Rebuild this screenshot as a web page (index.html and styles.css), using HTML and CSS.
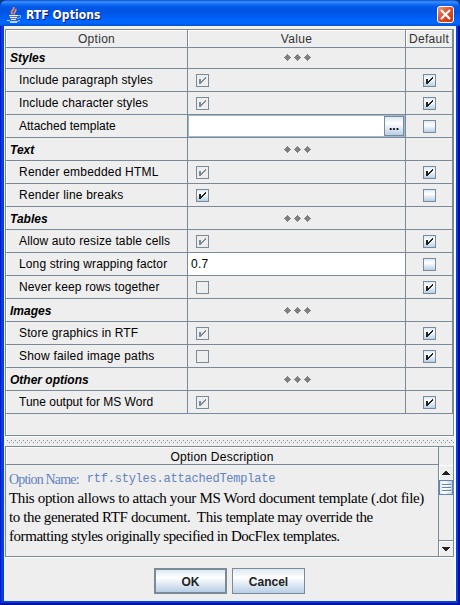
FILE: index.html
```
<!DOCTYPE html>
<html lang="en">
<head>
<meta charset="utf-8">
<title>RTF Options</title>
<link rel="stylesheet" href="styles.css">
</head>
<body>
<svg width="0" height="0" class="defs">
  <symbol id="tick" viewBox="0 0 7 7"><path d="M0 2h2v2h1v-1h1v-1h1v-1h1v-1h1v2h-1v1h-1v1h-1v1h-1v1h-1v1h-2z"/></symbol>
  <symbol id="dots" viewBox="0 0 27 7"><path d="M3 0h1v1h1v1h1v1h1v1h-1v1h-1v1h-1v1h-1v-1h-1v-1h-1v-1h-1v-1h1v-1h1v-1h1zM13 0h1v1h1v1h1v1h1v1h-1v1h-1v1h-1v1h-1v-1h-1v-1h-1v-1h-1v-1h1v-1h1v-1h1zM23 0h1v1h1v1h1v1h1v1h-1v1h-1v1h-1v1h-1v-1h-1v-1h-1v-1h-1v-1h1v-1h1v-1h1z"/></symbol>
</svg>
<div class="window">
  <header class="titlebar">
    <svg class="java" width="16" height="16" viewBox="0 0 16 16" fill="none">
      <path d="M5.500 7C2 4 8 3.500 6.500 0M7.500 7.500C6 5 10 4.500 8.500 2" stroke="#f58a62" stroke-width="1.7"/>
      <path d="M2 8h9v1h-9zM3 10h7v1h-7zM4 12h5v1h-5z" fill="#e8eeff"/>
      <path d="M2 9h9v1h-9zM3 11h7v1h-7z" fill="#5a6fb8"/>
      <path d="M11 8.500h2.500v2l-3 1" stroke="#9fb0e6"/>
      <path d="M0 13.500h2l2 1h6l3-1M3 15.500h7" stroke="#c5d2fa"/>
    </svg>
    <h1>RTF Options</h1>
    <span class="close"><svg width="11" height="11" viewBox="0 0 11 11"><path d="M1 1l9 9M10 1l-9 9" stroke="#fff" stroke-width="2.2"/></svg></span>
  </header>
  <main class="content">
    <section class="options">
      <div class="row head"><span>Option</span><span>Value</span><span>Default</span></div>
      <div class="row group"><b>Styles</b><span><svg class="dots"><use href="#dots"/></svg></span><span></span></div>
      <div class="row"><span>Include paragraph styles</span><span><i class="box off"><svg><use href="#tick"/></svg></i></span><span><i class="box"><svg><use href="#tick"/></svg></i></span></div>
      <div class="row"><span>Include character styles</span><span><i class="box off"><svg><use href="#tick"/></svg></i></span><span><i class="box"><svg><use href="#tick"/></svg></i></span></div>
      <div class="row"><span class="tight">Attached template</span><span class="editor"><i class="browse">...</i></span><span><i class="box"></i></span></div>
      <div class="row group"><b>Text</b><span><svg class="dots"><use href="#dots"/></svg></span><span></span></div>
      <div class="row"><span class="wide">Render embedded HTML</span><span><i class="box off"><svg><use href="#tick"/></svg></i></span><span><i class="box"><svg><use href="#tick"/></svg></i></span></div>
      <div class="row"><span class="wide">Render line breaks</span><span><i class="box"><svg><use href="#tick"/></svg></i></span><span><i class="box"></i></span></div>
      <div class="row group"><b>Tables</b><span><svg class="dots"><use href="#dots"/></svg></span><span></span></div>
      <div class="row"><span>Allow auto resize table cells</span><span><i class="box off"><svg><use href="#tick"/></svg></i></span><span><i class="box"><svg><use href="#tick"/></svg></i></span></div>
      <div class="row"><span>Long string wrapping factor</span><span class="text">0.7</span><span><i class="box"></i></span></div>
      <div class="row"><span>Never keep rows together</span><span><i class="box off"></i></span><span><i class="box"><svg><use href="#tick"/></svg></i></span></div>
      <div class="row group"><b>Images</b><span><svg class="dots"><use href="#dots"/></svg></span><span></span></div>
      <div class="row"><span>Store graphics in RTF</span><span><i class="box off"><svg><use href="#tick"/></svg></i></span><span><i class="box"><svg><use href="#tick"/></svg></i></span></div>
      <div class="row"><span class="wide">Show failed image paths</span><span><i class="box off"></i></span><span><i class="box"><svg><use href="#tick"/></svg></i></span></div>
      <div class="row group"><b>Other options</b><span><svg class="dots"><use href="#dots"/></svg></span><span></span></div>
      <div class="row"><span class="tight">Tune output for MS Word</span><span><i class="box off"><svg><use href="#tick"/></svg></i></span><span><i class="box"><svg><use href="#tick"/></svg></i></span></div>
    </section>
    <div class="splitter"></div>
    <section class="desc">
      <div class="main">
        <h2>Option Description</h2>
        <div class="body">
          <p class="name"><span>Option Name:</span><code>rtf.styles.attachedTemplate</code></p>
          <p class="first">This option allows to attach your MS Word document template (.dot file)</p>
          <p>to the generated RTF document.&nbsp; This template may override the</p>
          <p class="last">formatting styles originally specified in DocFlex templates.</p>
        </div>
      </div>
      <div class="scroll">
        <div class="corner"></div>
        <div class="arrow"><svg width="8" height="4"><path d="M3 0h2v1h1v1h1v1h1v1h-8v-1h1v-1h1v-1h1z"/></svg></div>
        <div class="track"><div class="thumb"><i></i><i></i><i></i></div></div>
        <div class="arrow down"><svg width="8" height="4"><path d="M0 0h8v1h-1v1h-1v1h-1v1h-2v-1h-1v-1h-1v-1h-1z"/></svg></div>
      </div>
    </section>
    <div class="buttons"><button class="ok">OK</button><button>Cancel</button></div>
  </main>
</div>
</body>
</html>
```
FILE: styles.css
```
* { box-sizing: border-box; margin: 0; padding: 0; }
body { width: 460px; height: 605px; overflow: hidden; background: #0a3a80; font: 12px/15px "Liberation Sans", Arial, sans-serif; color: #000; }
svg { display: block; shape-rendering: crispEdges; }
.java, .close svg { shape-rendering: auto; }
.defs { position: absolute; }
.window { width: 460px; height: 605px; padding: 0 4px 4px; border-radius: 7px 7px 0 0; background: #0040e0; box-shadow: inset 1px 0 #0019c8, inset -2px -2px #00109c; overflow: hidden; }
.titlebar { display: flex; align-items: center; height: 26px; margin: 0 -4px; padding: 3px 6px 0 7px; background: linear-gradient(#0a4fc8 0, #3b92ff 2px, #1470f8 4px, #0058e6 7px, #0054e3 12px, #0062fb 19px, #0068ff 23px, #0050d8 26px); }
.titlebar h1 { flex: 1; margin: 1px 0 0 3px; font: bold 12px/16px "DejaVu Sans", sans-serif; font-stretch: condensed; letter-spacing: .08px; color: #fff; text-shadow: 1px 1px #0a1883; }
.close { display: flex; align-items: center; justify-content: center; width: 17px; height: 17px; border: 1px solid #fff; border-radius: 3px; background: linear-gradient(135deg, #ee9878, #e1502b 45%, #c8350d); }
.content { display: flex; flex-direction: column; width: 452px; height: 575px; padding: 3px 2px 0 1px; background: #eee; box-shadow: inset 0 2px #f5f3e8, inset -2px 0 #f8f8f4; }
.options { height: 407px; border: 1px solid #7a8a99; box-shadow: 1px 1px #fff, inset 1px 1px #fff; }
.row { display: grid; grid-template-columns: 182px 218px 47px; height: 23px; }
.row > * { display: flex; align-items: center; border-right: 1px solid #7a8a99; border-bottom: 1px solid #7a8a99; white-space: nowrap; }
.row > :first-child { padding-left: 13px; letter-spacing: .13px; }
.row > .wide:first-child { letter-spacing: .21px; }
.row > .tight:first-child { letter-spacing: 0; }
.row > :nth-child(2) { padding-left: 8px; }
.row > :nth-child(3) { justify-content: center; }
.row.head { height: 16px; color: #333; }
.row.head > * { justify-content: center; padding: 2px 0 0; box-shadow: inset 1px 1px #fff; letter-spacing: .3px; }
.row.group > b { padding: 2px 0 0 4px; font-style: italic; letter-spacing: 0; }
.row.group > :nth-child(2) { justify-content: center; padding-left: 2px; }
.dots { width: 27px; height: 7px; fill: #808080; }
.box { display: block; width: 13px; height: 13px; padding: 2px; border: 1px solid #7a8a99; background: linear-gradient(#dce8f3, #fff 35%, #b8cfe5); }
.box svg { width: 7px; height: 7px; fill: #222; }
.box.off { background: #eee; }
.box.off svg { fill: #7a8a99; }
.row > .editor { justify-content: flex-end; background: #fff; box-shadow: inset 0 0 0 1px #a3b8cc; padding: 1px; }
.browse { width: 20px; height: 20px; border: 1px solid #7a8a99; background: linear-gradient(#dce8f3, #fff 35%, #b8cfe5); font: bold 12px/19px "Liberation Sans", sans-serif; text-align: center; }
.row > .text:nth-child(2) { background: #fff; padding: 1px 0 0 3px; letter-spacing: .3px; }
.splitter { height: 3px; margin: 4px 0 3px 2px; background: radial-gradient(circle at .5px .5px, #7a8a99 .5px, transparent .51px) 0 0 / 4px 4px, radial-gradient(circle at 2.5px 2.5px, #7a8a99 .5px, transparent .51px) 0 0 / 4px 4px; }
.desc { display: flex; height: 111px; border: 1px solid #7a8a99; box-shadow: 1px 1px #fff; }
.main { width: 432px; }
.desc h2 { height: 18px; border-bottom: 1px solid #7a8a99; box-shadow: inset 1px 1px #fff; font-weight: normal; font-size: 12px; line-height: 20px; text-align: center; letter-spacing: .25px; }
.body { padding: 5px 0 0 3px; font: 15px/19px "Liberation Serif", serif; letter-spacing: -.38px; white-space: nowrap; }
.body .first { letter-spacing: -.33px; }
.body .last { letter-spacing: -.44px; }
.body .name { display: flex; gap: 8px; font-size: 14px; letter-spacing: -.83px; color: #6382bf; }
.name code { font: 12px/19px "Liberation Mono", monospace; letter-spacing: -.22px; }
.scroll { display: flex; flex-direction: column; flex: 1; border-left: 1px solid #7a8a99; }
.corner { height: 18px; }
.arrow { display: flex; align-items: center; justify-content: center; height: 15px; box-shadow: inset 1px 1px #fff; fill: #222; }
.arrow.down { height: 16px; border-top: 1px solid #7a8a99; }
.track { flex: 1; }
.thumb { display: flex; flex-direction: column; align-items: center; justify-content: center; gap: 1px; height: 15px; border: 1px solid #6382bf; background: linear-gradient(90deg, #dce8f3, #fff 35%, #b8cfe5); }
.thumb i { width: 9px; height: 2px; border-top: 1px solid #6382bf; background: #fff; }
.buttons { display: flex; gap: 5px; margin: 11px 0 0 149px; }
.buttons button { width: 73px; height: 26px; padding-top: 1px; border: 1px solid #7a8a99; background: linear-gradient(#dce8f3, #fff 35%, #b8cfe5); font: bold 12px "Liberation Sans", sans-serif; color: #222; }
.buttons .ok { border-width: 2px; }
```
